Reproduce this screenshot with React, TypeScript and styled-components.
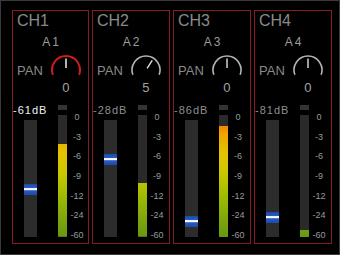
import * as React from "react";
import styled, { createGlobalStyle } from "styled-components";

const GlobalStyle = createGlobalStyle`
  html, body {
    margin: 0;
    padding: 0;
    background: #000;
  }
  body {
    font-family: "Liberation Sans", Arial, sans-serif;
  }
`;

const Frame = styled.div`
  width: 340px;
  height: 255px;
  box-sizing: border-box;
  border: 1px solid #3a3a3a;
  background: #000;
  padding: 9px 0 0 11px;
  display: flex;
  gap: 3px;
`;

const Strip = styled.div<{ $wide?: boolean }>`
  width: ${(p) => (p.$wide ? 78 : 77)}px;
  height: 234px;
  box-sizing: border-box;
  border: 1px solid #861b23;
  display: flex;
  flex-direction: column;
  flex-shrink: 0;
`;

const ChannelName = styled.div`
  padding: 2px 0 0 4px;
  font-size: 16px;
  line-height: 16px;
  color: #8a8a8a;
`;

const InputName = styled.div`
  margin-top: 7px;
  font-size: 12px;
  line-height: 12px;
  letter-spacing: 2px;
  text-align: center;
  padding-left: 2px;
  color: #9c9c9c;
`;

const PanRow = styled.div`
  margin-top: 6px;
  display: flex;
  align-items: flex-start;
  padding-left: 4px;
  gap: 7px;
`;

const PanLabel = styled.div`
  margin-top: 9.5px;
  font-size: 13px;
  line-height: 13px;
  color: #8a8a8a;
`;

const KnobColumn = styled.div`
  width: 32px;
  display: flex;
  flex-direction: column;
  align-items: center;
`;

const PanValue = styled.div`
  margin-top: 3px;
  font-size: 13px;
  line-height: 13px;
  color: #a2a2a2;
`;

const Lower = styled.div`
  margin-top: 10px;
  display: grid;
  grid-template-columns: 11px 13px 21px 9px 4px 12px;
  grid-template-rows: 11px 122px;
`;

const DbLabel = styled.div<{ $active?: boolean }>`
  grid-column: 1 / 5;
  grid-row: 1;
  margin-left: 0px;
  margin-top: 0.5px;
  font-size: 11px;
  line-height: 11px;
  letter-spacing: 1px;
  white-space: nowrap;
  color: ${(p) => (p.$active ? "#f2f2f2" : "#8e8e8e")};
`;

const PeakLamp = styled.div`
  grid-column: 4;
  grid-row: 1;
  margin-top: 1px;
  height: 5px;
  background: #333;
`;

const FaderTrack = styled.div`
  grid-column: 2;
  grid-row: 2;
  align-self: end;
  height: 117px;
  background: #2c2c2c;
  display: flex;
  flex-direction: column;
`;

const FaderThumb = styled.div`
  height: 11px;
  background: linear-gradient(
    to bottom,
    #1d48a8 0%,
    #2a5cc4 36%,
    #e8f2ff 40%,
    #ffffff 55%,
    #2a5cc4 60%,
    #1d48a8 100%
  );
`;

const Meter = styled.div`
  grid-column: 4;
  grid-row: 2;
  background: #2a2a2a;
  display: flex;
  flex-direction: column;
  justify-content: flex-end;
`;

const MeterFill = styled.div`
  background: linear-gradient(
    to bottom,
    #ff4400 0%,
    #f57a00 6%,
    #eea600 16%,
    #e3c400 32%,
    #c9c800 48%,
    #a6bd00 64%,
    #84aa0c 82%,
    #669810 100%
  );
  background-size: 100% 122px;
  background-position: bottom;
  background-repeat: no-repeat;
`;

const Scale = styled.div`
  grid-column: 6;
  grid-row: 2;
  margin-top: -2px;
  height: 126px;
  display: flex;
  flex-direction: column;
  justify-content: space-between;
  align-items: center;
`;

const ScaleMark = styled.div`
  font-size: 9px;
  line-height: 8px;
  color: #9a9a9a;
  white-space: nowrap;
`;

type Channel = {
  name: string;
  input: string;
  pan: number;
  panAngle: number;
  db: string;
  level: number;
  fader: number;
  active?: boolean;
};

const channels: Channel[] = [
  { name: "CH1", input: "A1", pan: 0, panAngle: 0, db: "-61dB", level: 0.76, fader: 63.5, active: true },
  { name: "CH2", input: "A2", pan: 5, panAngle: 33, db: "-28dB", level: 0.44, fader: 34 },
  { name: "CH3", input: "A3", pan: 0, panAngle: 0, db: "-86dB", level: 0.91, fader: 96 },
  { name: "CH4", input: "A4", pan: 0, panAngle: 0, db: "-81dB", level: 0.06, fader: 92 },
];

const marks = ["0", "-3", "-6", "-9", "-12", "-24", "-60"];

function Knob({ angle, active }: { angle: number; active?: boolean }) {
  return (
    <svg width="32" height="24" viewBox="0 0 32 24">
      <path
        d="M 2.84 20.79 A 14 14 0 1 1 29.16 20.79"
        fill="none"
        stroke={active ? "#d31b1b" : "#b4b4b4"}
        strokeWidth={active ? 2 : 1.6}
      />
      <line
        x1="16"
        y1="14"
        x2="16"
        y2="4.5"
        stroke={active ? "#ffffff" : "#e0e0e0"}
        strokeWidth="1.4"
        transform={`rotate(${angle} 16 16)`}
      />
    </svg>
  );
}

function ChannelStrip({ ch, wide }: { ch: Channel; wide?: boolean }) {
  return (
    <Strip $wide={wide}>
      <ChannelName>{ch.name}</ChannelName>
      <InputName>{ch.input}</InputName>
      <PanRow>
        <PanLabel>PAN</PanLabel>
        <KnobColumn>
          <Knob angle={ch.panAngle} active={ch.active} />
          <PanValue>{ch.pan}</PanValue>
        </KnobColumn>
      </PanRow>
      <Lower>
        <DbLabel $active={ch.active}>{ch.db}</DbLabel>
        <PeakLamp />
        <FaderTrack>
          <FaderThumb style={{ marginTop: ch.fader }} />
        </FaderTrack>
        <Meter>
          <MeterFill style={{ height: `${ch.level * 100}%` }} />
        </Meter>
        <Scale>
          {marks.map((m) => (
            <ScaleMark key={m}>{m}</ScaleMark>
          ))}
        </Scale>
      </Lower>
    </Strip>
  );
}

export default function App() {
  return (
    <>
      <GlobalStyle />
      <Frame>
        {channels.map((ch, i) => (
          <ChannelStrip key={ch.name} ch={ch} wide={i > 0} />
        ))}
      </Frame>
    </>
  );
}
